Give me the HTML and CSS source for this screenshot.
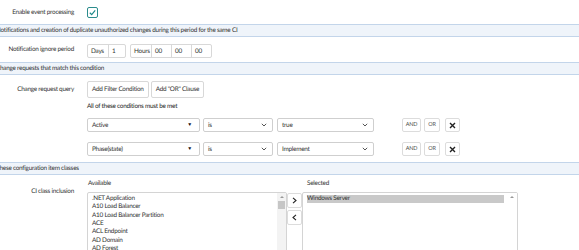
FILE: index.html
```html
<!DOCTYPE html>
<html lang="en">
<head>
    <meta charset="UTF-8">
    <title>Event processing</title>
    <link rel="stylesheet" href="styles.css">
</head>
<body>
<div class="form">
    <div class="row enable">
        <div class="label">Enable event processing</div>
        <div class="field">
            <span class="check">
                <svg width="9" height="9" viewBox="0 0 9 9"><path d="M1.8 4.8 L3.7 6.6 L7.2 2.4" fill="none" stroke="#1f8a8a" stroke-width="1.2"/></svg>
            </span>
        </div>
    </div>

    <div class="band"><span>Notifications and creation of duplicate unauthorized changes during this period for the same CI</span></div>

    <div class="row period">
        <div class="label">Notification ignore period</div>
        <div class="field boxes">
            <div class="group">
                <span class="cell days">Days</span><span class="cell num1">1</span>
            </div>
            <div class="group">
                <span class="cell hours">Hours</span><span class="cell n2">00</span><span class="cell n2">00</span><span class="cell n2">00</span>
            </div>
        </div>
    </div>

    <div class="band"><span>Change requests that match this condition</span></div>

    <div class="query">
        <div class="row">
            <div class="label">Change request query</div>
            <div class="field btns">
                <button class="btn">Add Filter Condition</button>
                <button class="btn">Add "OR" Clause</button>
            </div>
        </div>
        <div class="must">All of these conditions must be met</div>
        <div class="cond">
            <div class="sel fieldsel">Active<em>&#9660;</em></div>
            <div class="sel opsel">is<svg class="chev" width="6" height="4" viewBox="0 0 6 4"><path d="M0.8 0.8 L3 3 L5.2 0.8" fill="none" stroke="#555" stroke-width="1"/></svg></div>
            <div class="sel valsel">true<svg class="chev" width="6" height="4" viewBox="0 0 6 4"><path d="M0.8 0.8 L3 3 L5.2 0.8" fill="none" stroke="#555" stroke-width="1"/></svg></div>
            <button class="sbtn and">AND</button>
            <button class="sbtn or">OR</button>
            <button class="sbtn del"><svg width="7" height="7" viewBox="0 0 7 7"><path d="M1 1 L6 6 M6 1 L1 6" stroke="#222" stroke-width="1.4"/></svg></button>
        </div>
        <div class="cond">
            <div class="sel fieldsel">Phase(state)<em>&#9660;</em></div>
            <div class="sel opsel">is<svg class="chev" width="6" height="4" viewBox="0 0 6 4"><path d="M0.8 0.8 L3 3 L5.2 0.8" fill="none" stroke="#555" stroke-width="1"/></svg></div>
            <div class="sel valsel">Implement<svg class="chev" width="6" height="4" viewBox="0 0 6 4"><path d="M0.8 0.8 L3 3 L5.2 0.8" fill="none" stroke="#555" stroke-width="1"/></svg></div>
            <button class="sbtn and">AND</button>
            <button class="sbtn or">OR</button>
            <button class="sbtn del"><svg width="7" height="7" viewBox="0 0 7 7"><path d="M1 1 L6 6 M6 1 L1 6" stroke="#222" stroke-width="1.4"/></svg></button>
        </div>
    </div>

    <div class="band"><span>These configuration item classes</span></div>

    <div class="classes">
        <div class="label cilabel">CI class inclusion</div>
        <div class="slush">
            <div class="col">
                <div class="cap">Available</div>
                <div class="list avail">
                    <ul>
                        <li>.NET Application</li>
                        <li>A10 Load Balancer</li>
                        <li>A10 Load Balancer Partition</li>
                        <li>ACE</li>
                        <li>ACL Endpoint</li>
                        <li>AD Domain</li>
                        <li>AD Forest</li>
                        <li>AIX Server</li>
                    </ul>
                    <div class="scroll"><i class="up"></i><i class="thumb"></i></div>
                </div>
            </div>
            <div class="move">
                <button class="mbtn"><svg width="5" height="7" viewBox="0 0 5 7"><path d="M1 0.8 L4 3.5 L1 6.2" fill="none" stroke="#222" stroke-width="1.1"/></svg></button>
                <button class="mbtn"><svg width="5" height="7" viewBox="0 0 5 7"><path d="M4 0.8 L1 3.5 L4 6.2" fill="none" stroke="#222" stroke-width="1.1"/></svg></button>
            </div>
            <div class="col">
                <div class="cap sel-cap">Selected</div>
                <div class="list chosen">
                    <ul>
                        <li class="on">Windows Server</li>
                    </ul>
                    <div class="scroll"><i class="up"></i></div>
                </div>
            </div>
        </div>
    </div>
</div>
</body>
</html>
```
FILE: styles.css
```css
*{
    margin:0;
    padding:0;
    box-sizing: border-box;
    list-style: none;
}
body{
    font-family: Lato, "Open Sans", sans-serif;
    font-size: 6.4px;
    letter-spacing: -0.25px;
    text-rendering: geometricPrecision;
    color: #333;
    background: #fff;
    overflow: hidden;
}
button{
    font: inherit;
    letter-spacing: inherit;
    text-rendering: inherit;
    color: #333;
}
.form{
    width: 579px;
    height: 250px;
    overflow: hidden;
}
.row{
    display: flex;
    align-items: center;
}
.label{
    width: 74px;
    flex: none;
    text-align: right;
}
.field{
    margin-left: 13px;
}
.enable{
    height: 24px;
}
.check{
    display: flex;
    align-items: center;
    justify-content: center;
    width: 11px;
    height: 11px;
    border: 1px solid #2b8c8c;
    border-radius: 2px;
    margin-top: 1px;
}
.band{
    height: 13px;
    border-top: 1px solid #c3d5ea;
    border-bottom: 1px solid #c3d5ea;
    background: #eff4fa;
    display: flex;
    align-items: center;
    overflow: hidden;
    white-space: nowrap;
}
.band span{
    margin-left: -4px;
}
.period{
    height: 25px;
}
.boxes{
    display: flex;
    gap: 4px;
    margin-top: 3px;
}
.group{
    display: flex;
    height: 14px;
    border: 1px solid #d8d8d8;
    border-radius: 2px;
}
.cell{
    display: flex;
    align-items: center;
    padding-left: 3px;
    border-left: 1px solid #d8d8d8;
    white-space: nowrap;
}
.cell:first-child{
    border-left: none;
}
.days{width: 20px;}
.num1{width: 17px;}
.hours{width: 20px;}
.n2{width: 20px;}
.query{
    height: 87px;
    padding-top: 6px;
}
.btns{
    display: flex;
    gap: 2px;
}
.btn{
    height: 17px;
    padding: 0 4px;
    background: #fff;
    border: 1px solid #d8d8d8;
    border-radius: 2px;
}
.must{
    margin: 3px 0 0 87px;
    height: 11px;
    line-height: 11px;
    color: #222;
}
.cond{
    display: flex;
    align-items: center;
    margin: 6px 0 0 87px;
    height: 14px;
}
.cond + .cond{
    margin-top: 10px;
}
.sel{
    height: 14px;
    border: 1px solid #cfcfcf;
    border-radius: 2px;
    display: flex;
    align-items: center;
    justify-content: space-between;
    padding: 0 5px 0 4px;
}
.sel em{
    font-style: normal;
    font-size: 5px;
    color: #111;
    margin-right: 2px;
}
.fieldsel{width: 113px;}
.opsel{width: 70px; margin-left: 3px;}
.valsel{width: 97px; margin-left: 4px;}
.sbtn{
    font-size: 5.5px;
    color: #555;
    height: 14px;
    background: #fff;
    border: 1px solid #dcdcdc;
    border-radius: 2px;
    display: flex;
    align-items: center;
    justify-content: center;
}
.and{width: 19px; margin-left: 28px;}
.or{width: 16px; margin-left: 3px;}
.del{width: 15px; margin-left: 5px;}
.classes{
    display: flex;
    padding-top: 5px;
}
.cilabel{
    margin-top: 8px;
    height: 8px;
    line-height: 8px;
}
.slush{
    display: flex;
    margin-left: 13px;
}
.cap{
    height: 8px;
    line-height: 8px;
    margin: 0 0 4px 1px;
}
.sel-cap{
    margin-left: 5px;
}
.list{
    display: flex;
    height: 70px;
    border: 1px solid #d4d4d4;
    border-radius: 2px;
}
.list ul{
    flex: 1;
    padding: 2px 0 0 4px;
}
.list li{
    height: 8.33px;
    line-height: 8.33px;
    white-space: nowrap;
}
.avail{width: 200px;}
.chosen{width: 216px;}
.chosen ul{
    padding-right: 2px;
}
.list li.on{
    background: #c9c9c9;
}
.scroll{
    width: 9px;
    background: #f3f3f3;
    display: flex;
    flex-direction: column;
    align-items: center;
}
.chosen .scroll{
    width: 11px;
    background: #fff;
}
.up{
    margin-top: 3px;
    width: 0;
    height: 0;
    border-left: 2px solid transparent;
    border-right: 2px solid transparent;
    border-bottom: 2px solid #999;
}
.thumb{
    margin-top: 3px;
    width: 7px;
    height: 8px;
    background: #c6c6c6;
}
.move{
    display: flex;
    flex-direction: column;
    gap: 2px;
    margin-top: 13px;
    width: 15px;
}
.mbtn{
    width: 15px;
    height: 15px;
    background: #fff;
    border: 1px solid #dcdcdc;
    border-radius: 2px;
    display: flex;
    align-items: center;
    justify-content: center;
}
```
